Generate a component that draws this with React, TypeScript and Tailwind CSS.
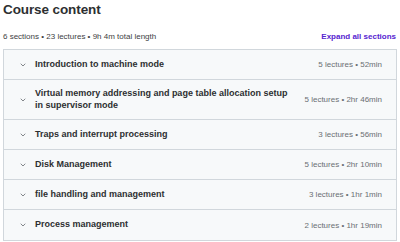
import { ChevronDown } from "lucide-react";

const sections = [
  { title: "Introduction to machine mode", meta: "5 lectures • 52min" },
  {
    title: "Virtual memory addressing and page table allocation setup in supervisor mode",
    meta: "5 lectures • 2hr 46min",
  },
  { title: "Traps and interrupt processing", meta: "3 lectures • 56min" },
  { title: "Disk Management", meta: "5 lectures • 2hr 10min" },
  { title: "file handling and management", meta: "3 lectures • 1hr 1min" },
  { title: "Process management", meta: "2 lectures • 1hr 19min" },
];

export default function App() {
  return (
    <div className="h-[242px] w-[400px] overflow-hidden bg-white px-[3px] font-['Liberation_Sans',Arial,sans-serif] text-[#2d2f31]">
      <h2 className="pt-[1px] text-[13.5px] leading-[17px] font-bold tracking-[-0.1px]">Course content</h2>

      <div className="mt-[12px] flex items-center justify-between pr-[1px]">
        <span className="text-[8px] leading-[14px] text-[#3e4143]">6 sections • 23 lectures • 9h 4m total length</span>
        <button type="button" className="text-[8px] leading-[14px] font-bold text-[#5624d0]">
          Expand all sections
        </button>
      </div>

      <div className="mt-[5px] w-[394px] border border-[#d1d7dc]">
        {sections.map((section, i) => (
          <div
            key={section.title}
            className={
              "flex min-h-[30px] items-center justify-between gap-4 bg-[#f7f9fa] py-[8px] pr-[14px] pl-[15px]" +
              (i < sections.length - 1 ? " border-b border-[#d1d7dc]" : " min-h-[29px]")
            }
          >
            <div className="flex items-center gap-[8px]">
              <ChevronDown size={8} strokeWidth={2.5} className="shrink-0 text-[#6a6f73]" />
              <span className="max-w-[262px] text-[9px] leading-[11.5px] font-bold">{section.title}</span>
            </div>
            <span className="shrink-0 text-[8px] leading-[11px] text-[#6a6f73]">{section.meta}</span>
          </div>
        ))}
      </div>
    </div>
  );
}
